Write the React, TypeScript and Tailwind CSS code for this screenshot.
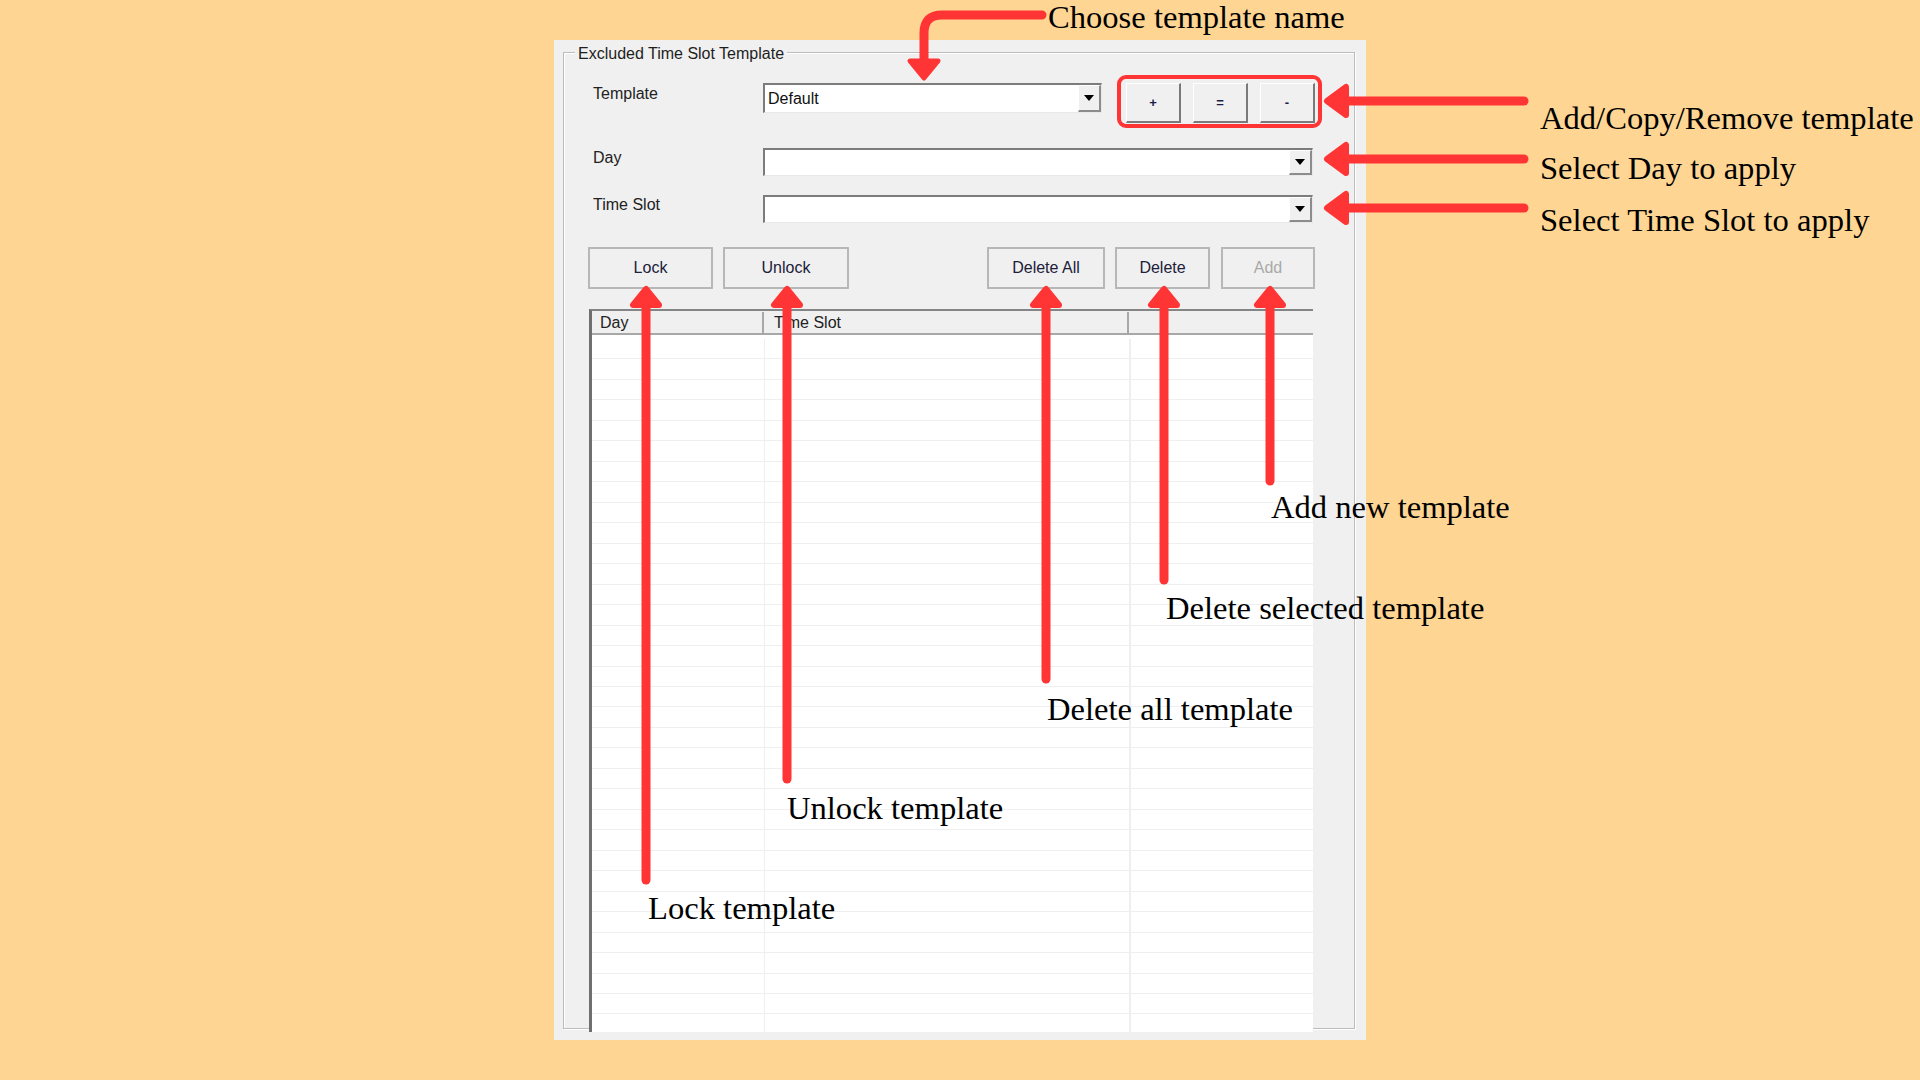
const RED = '#ff3535';

const Note = ({ className, children }: { className: string; children: React.ReactNode }) => (
  <div
    className={`absolute whitespace-nowrap font-['Liberation_Serif','Times_New_Roman',serif] text-[32.6px] leading-none text-black ${className}`}
  >
    {children}
  </div>
);

const DropButton = () => (
  <div className="flex h-full w-[23px] items-center justify-center border-t border-l border-t-white border-l-white border-b-2 border-r-2 border-b-[#8c8c8c] border-r-[#8c8c8c] bg-[#f0f0f0]">
    <svg width="10" height="6" viewBox="0 0 10 6">
      <polygon points="0,0 10,0 5,6" fill="#000" />
    </svg>
  </div>
);

const Combo = ({ className, value }: { className: string; value?: string }) => (
  <div
    className={`flex border-t-2 border-l-2 border-b border-r border-t-[#7c7c7c] border-l-[#7c7c7c] border-b-[#e8e8e8] border-r-[#e8e8e8] bg-white ${className}`}
  >
    <div className="flex-1 pl-[3px] text-[16px] leading-[27px] text-[#111]">{value}</div>
    <DropButton />
  </div>
);

const Button = ({ className, children, disabled }: { className: string; children: string; disabled?: boolean }) => (
  <div
    className={`flex h-[42px] items-center justify-center border-2 border-[#b7b7b7] bg-[#f0f0f0] text-[16px] ${
      disabled ? 'text-[#a9a9a9]' : 'text-[#20203a]'
    } ${className}`}
  >
    {children}
  </div>
);

const SmallButton = ({ children }: { children: string }) => (
  <div className="flex h-[40px] w-[55px] items-center justify-center border-t border-l border-t-white border-l-white border-b-2 border-r-2 border-b-[#7a7a7a] border-r-[#7a7a7a] bg-[#f0f0f0] text-[13px] font-bold text-[#1c1c48]">
    {children}
  </div>
);

const rows = Array.from({ length: 34 });

export default function App() {
  return (
    <div className="relative h-[1080px] w-[1920px] overflow-hidden bg-[#ffd593] pl-[554px] pt-[40px] font-['Liberation_Sans',Arial,sans-serif]">
      {/* dialog */}
      <div className="h-[1000px] w-[812px] bg-[#f0f0f0] pl-[9px] pt-[12px]">
        <div className="relative h-[977px] w-[792px] border border-[#bcbcbc] pl-[25px] pt-[22px] shadow-[inset_1px_1px_0_#ffffff,1px_1px_0_#ffffff]">
          <span className="absolute -top-[8px] left-[11px] bg-[#f0f0f0] px-[3px] text-[16px] leading-[18px] text-[#1e1e1e]">
            Excluded Time Slot Template
          </span>

          {/* template row */}
          <div className="flex h-[53px] items-start">
            <div className="mt-[10px] w-[174px] pl-[4px] text-[16px] leading-[18px] text-[#222]">Template</div>
            <Combo className="mt-[8px] h-[30px] w-[339px]" value="Default" />
            <div className="ml-[15px] flex h-[53px] gap-[12px] rounded-[9px] border-4 border-[#ff3535] pl-[5px] pr-[3px] pt-[4px]">
              <SmallButton>+</SmallButton>
              <SmallButton>=</SmallButton>
              <SmallButton>-</SmallButton>
            </div>
          </div>

          {/* day row */}
          <div className="mt-[20px] flex h-[28px] items-start">
            <div className="mt-[1px] w-[174px] pl-[4px] text-[16px] leading-[18px] text-[#222]">Day</div>
            <Combo className="h-[28px] w-[550px]" />
          </div>

          {/* time slot row */}
          <div className="mt-[19px] flex h-[28px] items-start">
            <div className="mt-[1px] w-[174px] pl-[4px] text-[16px] leading-[18px] text-[#222]">Time Slot</div>
            <Combo className="h-[28px] w-[550px]" />
          </div>

          {/* action buttons */}
          <div className="mt-[24px] flex -ml-[1px]">
            <Button className="w-[125px]">Lock</Button>
            <Button className="ml-[10px] w-[126px]">Unlock</Button>
            <Button className="ml-[138px] w-[118px]">Delete All</Button>
            <Button className="ml-[10px] w-[95px]">Delete</Button>
            <Button className="ml-[11px] w-[94px]" disabled>
              Add
            </Button>
          </div>

          {/* list */}
          <div className="mt-[20px] h-[723px] w-[724px] overflow-hidden border-t-2 border-l-[3px] border-t-[#858585] border-l-[#6f6f6f] bg-white">
            <div className="flex h-[24px] border-b-2 border-[#a8a8a8] bg-[#f0f0f0] pt-[1px] text-[16px] leading-[22px] text-[#222]">
              <div className="w-[172px] border-r-2 border-[#a8a8a8] pl-[8px]">Day</div>
              <div className="w-[365px] border-r-2 border-[#a8a8a8] pl-[10px]">Time Slot</div>
              <div className="flex-1" />
            </div>
            <div className="pt-[4px]">
              {rows.map((_, i) => (
                <div key={i} className="flex h-[20.47px] border-b border-[#efefef]">
                  <div className="w-[173px] border-r border-[#efefef]" />
                  <div className="w-[366px] border-r-2 border-[#efefef]" />
                  <div className="flex-1" />
                </div>
              ))}
            </div>
          </div>
        </div>
      </div>

      {/* annotation arrows */}
      <svg className="pointer-events-none absolute left-0 top-0" width="1920" height="1080" viewBox="0 0 1920 1080">
        <path d="M1042 15 H942 Q924 15 924 33 V62" fill="none" stroke={RED} strokeWidth="9" strokeLinecap="round" />
        <polygon points="910,61 938,61 924,78" fill={RED} stroke={RED} strokeWidth="5" strokeLinejoin="round" />
        {[101, 159, 208].map((y) => (
          <g key={y}>
            <line x1="1344" y1={y} x2="1524" y2={y} stroke={RED} strokeWidth="9" strokeLinecap="round" />
            <polygon
              points={`1327,${y} 1346,${y - 14} 1346,${y + 14}`}
              fill={RED}
              stroke={RED}
              strokeWidth="6"
              strokeLinejoin="round"
            />
          </g>
        ))}
        {[
          [646, 880],
          [787, 779],
          [1046, 679],
          [1164, 580],
          [1270, 481],
        ].map(([x, y2]) => (
          <g key={x}>
            <line x1={x} y1="302" x2={x} y2={y2} stroke={RED} strokeWidth="9" strokeLinecap="round" />
            <polygon
              points={`${x},289 ${x - 13},305 ${x + 13},305`}
              fill={RED}
              stroke={RED}
              strokeWidth="6"
              strokeLinejoin="round"
            />
          </g>
        ))}
      </svg>

      {/* annotation texts */}
      <Note className="left-[1048px] top-[1px]">Choose template name</Note>
      <Note className="left-[1540px] top-[102px]">Add/Copy/Remove template</Note>
      <Note className="left-[1540px] top-[152px]">Select Day to apply</Note>
      <Note className="left-[1540px] top-[204px]">Select Time Slot to apply</Note>
      <Note className="left-[1271px] top-[491px]">Add new template</Note>
      <Note className="left-[1166px] top-[592px]">Delete selected template</Note>
      <Note className="left-[1047px] top-[693px]">Delete all template</Note>
      <Note className="left-[787px] top-[792px]">Unlock template</Note>
      <Note className="left-[648px] top-[892px]">Lock template</Note>
    </div>
  );
}
